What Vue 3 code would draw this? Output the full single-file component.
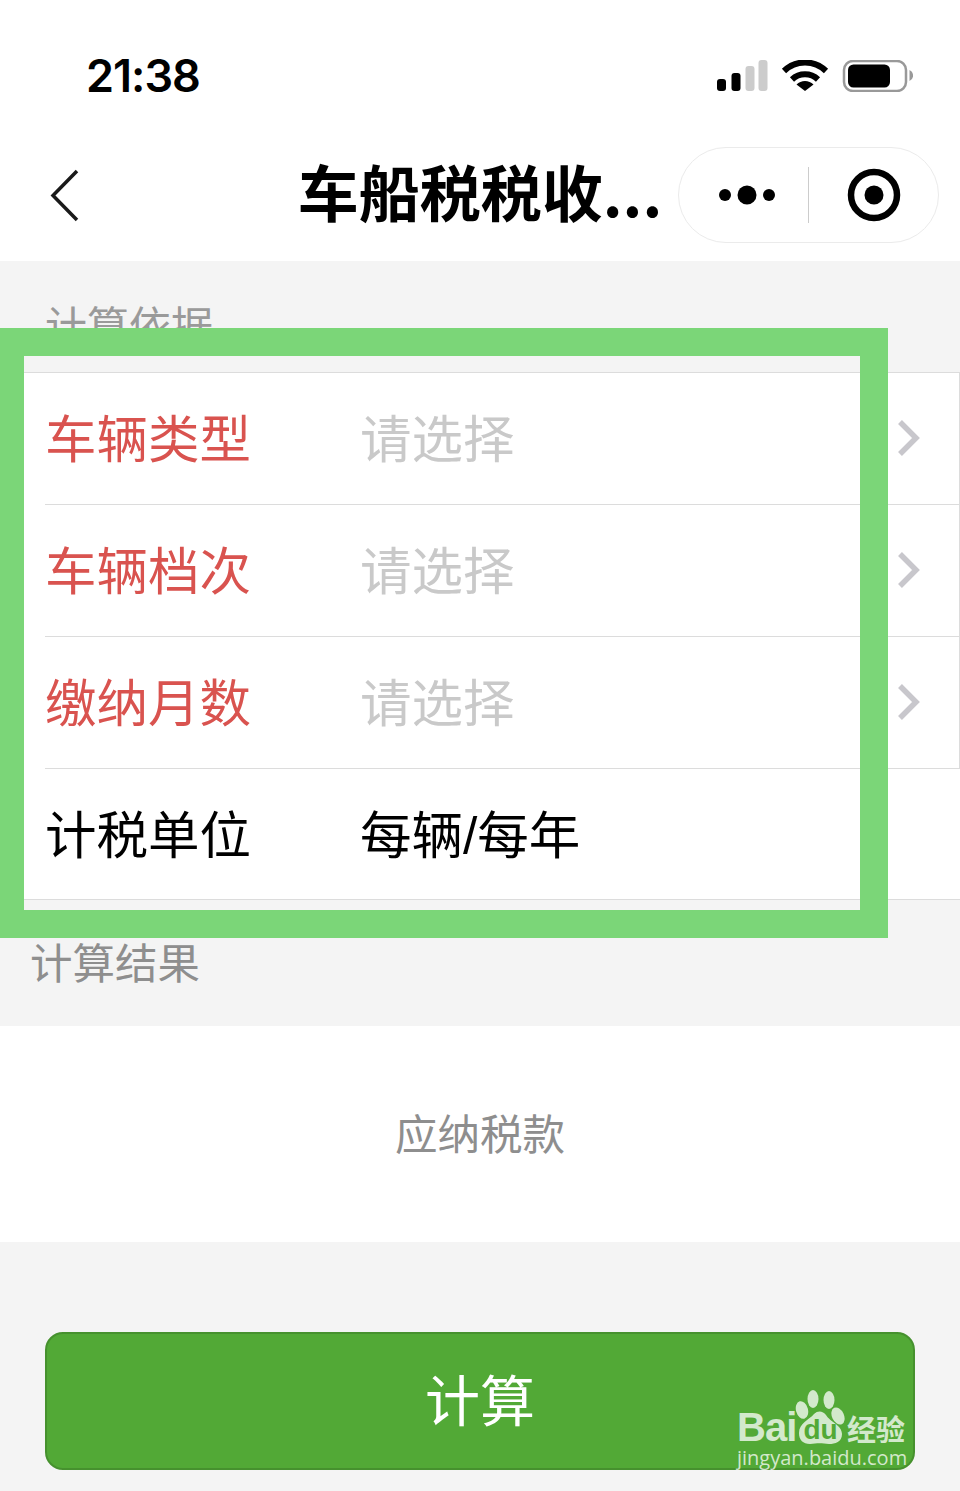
<script setup>
const rows = [
  { label: '车辆类型', value: '请选择', required: true },
  { label: '车辆档次', value: '请选择', required: true },
  { label: '缴纳月数', value: '请选择', required: true },
  { label: '计税单位', value: '每辆/每年', required: false }
]
</script>

<template>
  <div class="page">
    <div class="status">
      <span class="time">21:38</span>
      <svg class="status__icons" width="196" height="32" viewBox="0 0 196 32">
        <rect x="0" y="19" width="9" height="12" rx="3" fill="#000" />
        <rect x="14.500" y="13" width="9" height="18" rx="3" fill="#000" />
        <rect x="28.500" y="6" width="9" height="25" rx="3" fill="#ccc" />
        <rect x="41.500" y="0" width="9" height="31" rx="3" fill="#ccc" />
        <path d="M67 11 A 30 30 0 0 1 109 11" fill="none" stroke="#000" stroke-width="6" />
        <path d="M75 19.500 A 19 19 0 0 1 101 19.500" fill="none" stroke="#000" stroke-width="6" />
        <path d="M79.500 24.500 A 12 12 0 0 1 96.500 24.500 L88 31 Z" fill="#000" />
        <rect x="127" y="1" width="62" height="30" rx="9" fill="none" stroke="#999" stroke-width="2.500" />
        <rect x="131" y="4.500" width="42" height="23" rx="5.500" fill="#000" />
        <path d="M192.500 10 A 6 6 0 0 1 192.500 21 Z" fill="#999" />
      </svg>
    </div>

    <div class="nav">
      <svg class="nav__back" width="30" height="54" viewBox="0 0 30 54">
        <path d="M27 2 L3 26.500 L27 51" fill="none" stroke="#1a1a1a" stroke-width="3.500" />
      </svg>
      <div class="nav__title">车船税税收...</div>
      <div class="capsule">
        <svg width="60" height="24" viewBox="0 0 60 24">
          <circle cx="7" cy="12" r="6" fill="#000" />
          <circle cx="29" cy="12" r="9.500" fill="#000" />
          <circle cx="51" cy="12" r="6" fill="#000" />
        </svg>
        <span class="capsule__line"></span>
        <svg class="capsule__target" width="54" height="54" viewBox="0 0 54 54">
          <circle cx="27" cy="27" r="23" fill="none" stroke="#000" stroke-width="6.500" />
          <circle cx="27" cy="27" r="9.500" fill="#000" />
        </svg>
      </div>
    </div>

    <div class="section-title">计算依据</div>

    <div class="form">
      <div
        v-for="row in rows"
        :key="row.label"
        class="row"
        :class="{ 'row--picker': row.required }"
      >
        <span class="row__label" :class="{ 'row__label--red': row.required }">{{ row.label }}</span>
        <span class="row__value" :class="{ 'row__value--empty': row.required }">{{ row.value }}</span>
        <svg v-if="row.required" class="row__arrow" width="24" height="38" viewBox="0 0 24 38">
          <path d="M3 3 L19 19 L3 35" fill="none" stroke="#c8c7cc" stroke-width="5.500" />
        </svg>
      </div>
    </div>

    <div class="section-title section-title--result">计算结果</div>

    <div class="result">应纳税款</div>

    <div class="action">
      <button class="btn">计算</button>
    </div>

    <div class="frame"></div>

    <div class="mark">
      <span class="mark__bai">Bai</span>
      <svg class="mark__paw" width="52" height="60" viewBox="0 0 52 60">
        <ellipse cx="18" cy="10" rx="5.500" ry="9" fill="#fff" />
        <ellipse cx="34" cy="11" rx="5.500" ry="9" fill="#fff" />
        <ellipse cx="7" cy="21" rx="6" ry="9" transform="rotate(-15 7 21)" fill="#fff" />
        <ellipse cx="43" cy="27" rx="6" ry="9" transform="rotate(-25 43 27)" fill="#fff" />
        <path d="M4 44 C4 34 14 31 19 25 C23 21 28 22 31 26 C35 33 47 36 47 45 C47 53 40 55 34 55 C27 54 22 54 15 55 C8 55 4 51 4 44 Z" fill="#fff" />
        <text x="25.500" y="50" text-anchor="middle" class="mark__du">du</text>
      </svg>
      <span class="mark__cn">经验</span>
      <span class="mark__url">jingyan.baidu.com</span>
    </div>
  </div>
</template>

<style>
html,
body {
  margin: 0;
  background: #f4f4f4;
}
</style>

<style scoped>
.page {
  position: relative;
  width: 960px;
  height: 1491px;
  overflow: hidden;
  background: #f4f4f4;
  font-family: "Noto Sans CJK SC", "Liberation Sans", sans-serif;
}

.status {
  display: flex;
  justify-content: space-between;
  align-items: center;
  box-sizing: border-box;
  height: 130px;
  padding: 20px 47px 0 86px;
  background: #fff;
}

.time {
  font-family: Inter, "Liberation Sans", sans-serif;
  font-size: 45px;
  font-weight: 600;
  letter-spacing: -1px;
  color: #000;
}

.status__icons {
  margin-top: 1px;
  margin-left: auto;
}

.nav {
  display: grid;
  grid-template-columns: 1fr auto 1fr;
  align-items: center;
  height: 131px;
  background: #fff;
}

.nav__back {
  margin-left: 50px;
}

.nav__title {
  font-size: 61px;
  font-weight: 700;
  line-height: 96px;
  color: #000;
  margin-top: -10px;
}

.capsule {
  display: flex;
  align-items: center;
  justify-self: end;
  box-sizing: border-box;
  width: 261px;
  height: 96px;
  margin-right: 21px;
  margin-top: -2px;
  padding-left: 39px;
  background: #fff;
  border: 1px solid #ebebeb;
  border-radius: 48px;
}

.capsule__line {
  width: 1px;
  height: 56px;
  margin-left: 30px;
  background: #ccc;
}

.capsule__target {
  margin-left: 38px;
}

.section-title {
  box-sizing: border-box;
  height: 111px;
  padding: 33px 0 0 45px;
  font-size: 42px;
  line-height: 60px;
  color: #9a9a9a;
}

.section-title--result {
  height: 126px;
  padding: 31px 0 0 30px;
  font-size: 42.500px;
  color: #8e8e8e;
}

.form {
  background: #fff;
  border-top: 1px solid #dcdcdc;
  border-bottom: 1px solid #dcdcdc;
}

.row {
  display: flex;
  align-items: center;
  box-sizing: border-box;
  height: 132px;
  padding-bottom: 6px;
  margin-left: 45px;
  border-top: 1px solid #dcdcdc;
}

.row:first-child {
  height: 131px;
  border-top: none;
}

.row:last-child {
  height: 131px;
}

.row--picker {
  border-right: 1px solid #dcdcdc;
}

.row__label {
  width: 315px;
  box-sizing: border-box;
  font-size: 51.500px;
  color: #000;
}

.row__label--red {
  color: #d9534f;
}

.row__value {
  flex: 1;
  font-family: "Liberation Sans", "Noto Sans CJK SC", sans-serif;
  font-size: 51.500px;
  color: #000;
}

.row__value--empty {
  color: #c9c9c9;
}

.row__arrow {
  margin-right: 38px;
  margin-top: 4px;
}

.result {
  height: 216px;
  padding-bottom: 4px;
  box-sizing: border-box;
  background: #fff;
  font-size: 42.500px;
  line-height: 212px;
  text-align: center;
  color: #8e8e8e;
}

.action {
  padding: 90px 45px 0;
}

.btn {
  display: block;
  width: 100%;
  height: 138px;
  padding: 0 0 8px;
  background: #52a936;
  border: 2px solid #46912e;
  border-radius: 18px;
  font-family: inherit;
  font-size: 55px;
  color: #fff;
}

.frame {
  position: absolute;
  left: 0;
  top: 328px;
  box-sizing: border-box;
  width: 888px;
  height: 610px;
  border: 28px solid #7bd678;
  border-left-width: 24px;
}

.mark {
  position: absolute;
  left: 737px;
  top: 1388px;
  width: 175px;
  height: 82px;
  color: rgba(255, 255, 255, 0.75);
}

.mark__bai {
  position: absolute;
  left: 0;
  top: 21px;
  font-family: "Liberation Sans", sans-serif;
  font-size: 40px;
  font-weight: 700;
  line-height: 36px;
  letter-spacing: -1px;
}

.mark__paw {
  position: absolute;
  left: 58px;
  top: 1px;
  opacity: 0.75;
}

.mark__du {
  font-family: "Liberation Sans", sans-serif;
  font-size: 28px;
  font-weight: 700;
  fill: #52a936;
}

.mark__cn {
  position: absolute;
  left: 110px;
  top: 23px;
  font-size: 29px;
  font-weight: 700;
  line-height: 34px;
}

.mark__url {
  position: absolute;
  left: 0;
  top: 58px;
  font-family: "Open Sans", sans-serif;
  font-size: 20px;
  line-height: 24px;
  white-space: nowrap;
}
</style>
